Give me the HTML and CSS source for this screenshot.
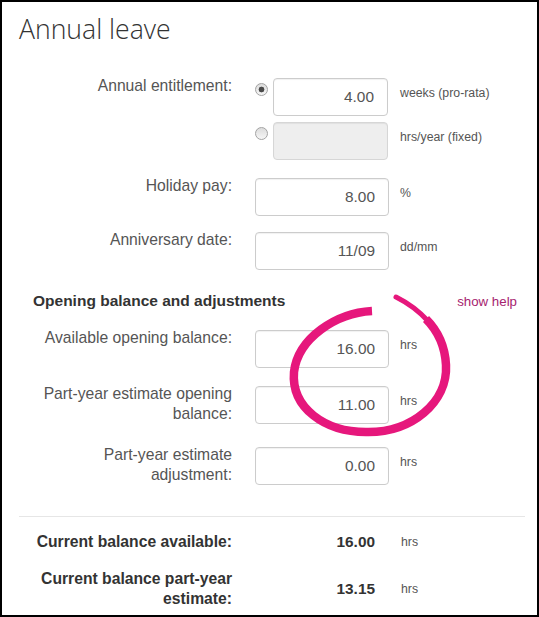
FILE: index.html
```html
<!DOCTYPE html>
<html lang="en">
<head>
<meta charset="utf-8">
<title>Annual leave</title>
<link rel="stylesheet" href="styles.css">
</head>
<body>
<div class="page">
  <div class="panel">
    <h1 class="title">Annual leave</h1>
    <div class="form">
      <div class="row">
        <div class="label">Annual entitlement:</div>
        <div class="stack">
          <div class="opt">
            <input class="radio" type="radio" name="ent" checked>
            <input class="input narrow" type="text" value="4.00" readonly>
            <div class="unit unit-opt">weeks (pro-rata)</div>
          </div>
          <div class="opt opt-second">
            <input class="radio" type="radio" name="ent">
            <input class="input narrow" type="text" value="" disabled>
            <div class="unit unit-opt">hrs/year (fixed)</div>
          </div>
        </div>
      </div>
      <div class="row row-holiday">
        <div class="label">Holiday pay:</div>
        <input class="input" type="text" value="8.00" readonly>
        <div class="unit">%</div>
      </div>
      <div class="row row-anniv">
        <div class="label">Anniversary date:</div>
        <input class="input" type="text" value="11/09" readonly>
        <div class="unit">dd/mm</div>
      </div>

      <div class="section-head">
        <div class="section-title">Opening balance and adjustments</div>
        <a class="help" href="#">show help</a>
      </div>

      <div class="row row-open1">
        <div class="label">Available opening balance:</div>
        <input class="input" type="text" value="16.00" readonly>
        <div class="unit">hrs</div>
      </div>
      <div class="row row-open2">
        <div class="label">Part-year estimate opening balance:</div>
        <input class="input" type="text" value="11.00" readonly>
        <div class="unit">hrs</div>
      </div>
      <div class="row row-open3">
        <div class="label">Part-year estimate adjustment:</div>
        <input class="input" type="text" value="0.00" readonly>
        <div class="unit">hrs</div>
      </div>

      <div class="divider"></div>

      <div class="sum-row sum1">
        <div class="sum-label">Current balance available:</div>
        <div class="sum-value">16.00</div>
        <div class="sum-unit">hrs</div>
      </div>
      <div class="sum-row sum2">
        <div class="sum-label">Current balance part-year estimate:</div>
        <div class="sum-value">13.15</div>
        <div class="sum-unit">hrs</div>
      </div>
    </div>
  </div>

  <svg class="scribble" width="539" height="617" viewBox="0 0 539 617" aria-hidden="true">
    <path d="M372 311 C336 313, 298 338, 294 372 C291 408, 325 432, 366 432 C412 433, 448 402, 446 365 C445 346, 438 331, 426 319"
          fill="none" stroke="#e6177c" stroke-width="8.5" stroke-linecap="butt"/>
    <path d="M428 321 C418 310, 408 303, 396 297"
          fill="none" stroke="#e6177c" stroke-width="5" stroke-linecap="round"/>
  </svg>
</div>
</body>
</html>
```

FILE: styles.css
```css
html, body {
  margin: 0;
  padding: 0;
  background: #fff;
}

body {
  font-family: "Liberation Sans", Arial, sans-serif;
  color: #555;
}

.page {
  position: relative;
  width: 539px;
  height: 617px;
}

.panel {
  box-sizing: border-box;
  width: 539px;
  height: 617px;
  border: 2px solid #000;
  padding: 0 12px 0 17px;
  background: #fff;
}

.title {
  margin: 13px 0 0;
  font-family: "Open Sans", "Liberation Sans", sans-serif;
  font-weight: 300;
  font-size: 26.6px;
  line-height: 28px;
  color: #333;
}

.form {
  margin-top: 35px;
}

.row {
  display: flex;
  align-items: flex-start;
}

.label {
  box-sizing: border-box;
  width: 200px;
  margin-left: 13px;
  margin-top: -2px;
  margin-right: 23px;
  text-align: right;
  font-size: 15.7px;
  line-height: 20px;
  color: #555;
}

.stack {
  display: flex;
  flex-direction: column;
}

.opt {
  display: flex;
  align-items: flex-start;
}

.opt-second {
  margin-top: 6px;
}

.radio {
  -webkit-appearance: none;
  appearance: none;
  box-sizing: border-box;
  width: 13px;
  height: 13px;
  margin: 5px 5px 0 0;
  border: 1px solid #a3a3a3;
  border-radius: 50%;
  background: linear-gradient(#dcdcdc, #f6f6f6);
}

.radio:checked {
  background: radial-gradient(circle, #4a4a4a 0 2.6px, transparent 3.2px), linear-gradient(#dcdcdc, #f6f6f6);
}

.input {
  box-sizing: border-box;
  width: 134px;
  height: 38px;
  margin: 0;
  padding: 0 13px;
  border: 1px solid #ccc;
  border-radius: 4px;
  background: #fff;
  box-shadow: inset 0 1px 1px rgba(0, 0, 0, 0.06);
  font-family: "Liberation Sans", Arial, sans-serif;
  font-size: 15.4px;
  color: #555;
  text-align: right;
  outline: none;
}

.input.narrow {
  width: 115px;
}

.input:disabled {
  background: #eee;
  border-color: #d6d6d6;
}

.unit {
  margin-left: 11px;
  padding-top: 7px;
  font-size: 12.3px;
  line-height: 17px;
  color: #555;
}

.unit-opt {
  margin-left: 12px;
}

.row-holiday {
  margin-top: 18px;
}

.row-anniv {
  margin-top: 16px;
}

.section-head {
  display: flex;
  align-items: baseline;
  margin-top: 21px;
}

.section-title {
  margin-left: 14px;
  font-weight: bold;
  font-size: 15.5px;
  line-height: 20px;
  color: #333;
}

.help {
  margin-left: auto;
  margin-right: 8px;
  font-size: 13.3px;
  line-height: 20px;
  color: #a6236f;
  text-decoration: none;
}

.row-open1 {
  margin-top: 18px;
}

.row-open2 {
  margin-top: 18px;
}

.row-open3 {
  margin-top: 23px;
}

.divider {
  margin-top: 31px;
  border-top: 1px solid #e6e6e6;
}

.sum-row {
  display: flex;
  align-items: center;
}

.sum1 {
  margin-top: 15px;
}

.sum2 {
  margin-top: 17px;
}

.sum-label {
  width: 200px;
  margin-left: 13px;
  margin-right: 23px;
  text-align: right;
  font-weight: bold;
  font-size: 15.7px;
  line-height: 20px;
  color: #333;
}

.sum-value {
  box-sizing: border-box;
  width: 134px;
  padding-right: 14px;
  text-align: right;
  font-weight: bold;
  font-size: 15.4px;
  line-height: 20px;
  color: #333;
}

.sum-unit {
  margin-left: 12px;
  font-size: 12.3px;
  line-height: 17px;
  color: #555;
}

.scribble {
  position: absolute;
  top: 0;
  left: 0;
  pointer-events: none;
}
```
